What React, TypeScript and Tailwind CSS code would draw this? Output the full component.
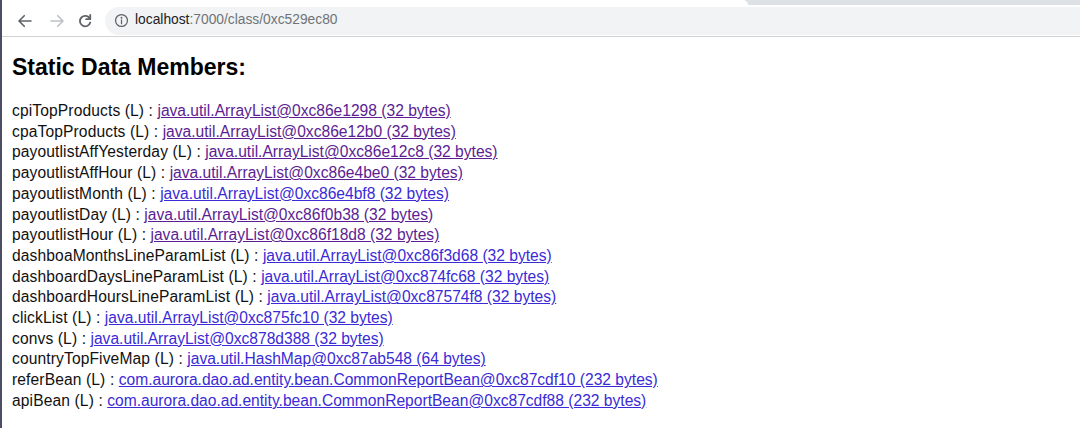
import React from "react";

const BLUE = "text-[#3a2bd6] decoration-[#3a2bd6]";
const PURPLE = "text-[#5b1e93] decoration-[#5b1e93]";

const rows: { name: string; link: string; visited: boolean }[] = [
  { name: "cpiTopProducts", link: "java.util.ArrayList@0xc86e1298 (32 bytes)", visited: true },
  { name: "cpaTopProducts", link: "java.util.ArrayList@0xc86e12b0 (32 bytes)", visited: true },
  { name: "payoutlistAffYesterday", link: "java.util.ArrayList@0xc86e12c8 (32 bytes)", visited: true },
  { name: "payoutlistAffHour", link: "java.util.ArrayList@0xc86e4be0 (32 bytes)", visited: true },
  { name: "payoutlistMonth", link: "java.util.ArrayList@0xc86e4bf8 (32 bytes)", visited: false },
  { name: "payoutlistDay", link: "java.util.ArrayList@0xc86f0b38 (32 bytes)", visited: true },
  { name: "payoutlistHour", link: "java.util.ArrayList@0xc86f18d8 (32 bytes)", visited: true },
  { name: "dashboaMonthsLineParamList", link: "java.util.ArrayList@0xc86f3d68 (32 bytes)", visited: false },
  { name: "dashboardDaysLineParamList", link: "java.util.ArrayList@0xc874fc68 (32 bytes)", visited: false },
  { name: "dashboardHoursLineParamList", link: "java.util.ArrayList@0xc87574f8 (32 bytes)", visited: false },
  { name: "clickList", link: "java.util.ArrayList@0xc875fc10 (32 bytes)", visited: false },
  { name: "convs", link: "java.util.ArrayList@0xc878d388 (32 bytes)", visited: false },
  { name: "countryTopFiveMap", link: "java.util.HashMap@0xc87ab548 (64 bytes)", visited: false },
  { name: "referBean", link: "com.aurora.dao.ad.entity.bean.CommonReportBean@0xc87cdf10 (232 bytes)", visited: false },
  { name: "apiBean", link: "com.aurora.dao.ad.entity.bean.CommonReportBean@0xc87cdf88 (232 bytes)", visited: false },
];

export default function App() {
  return (
    <div
      className="w-[1080px] h-[428px] overflow-hidden bg-white flex"
      style={{ fontFamily: '"Liberation Sans", Arial, sans-serif' }}
    >
      <div className="w-[2px] bg-[#4b4d63] shrink-0" />
      <div className="flex-1 flex flex-col">
        {/* tab strip */}
        <div className="h-[5px] flex bg-[#dee1e6]">
          <div className="w-[746px] bg-white rounded-tr-[6px]" />
        </div>
        {/* toolbar */}
        <div className="h-[32px] bg-white flex items-center border-b border-[#d3d3d3]">
          <div className="flex items-center pl-[14px] text-[#5f6368]">
            <svg width="18" height="18" viewBox="0 0 24 24" fill="none" stroke="#5f6368" strokeWidth="2.2" strokeLinecap="round" strokeLinejoin="round">
              <path d="M20 12H5M11 5l-7 7 7 7" />
            </svg>
            <svg className="ml-[14px]" width="18" height="18" viewBox="0 0 24 24" fill="none" stroke="#bdc1c6" strokeWidth="2.2" strokeLinecap="round" strokeLinejoin="round">
              <path d="M4 12h15M13 5l7 7-7 7" />
            </svg>
            <svg className="ml-[10px]" width="18" height="18" viewBox="0 0 24 24" fill="none" stroke="#5f6368" strokeWidth="2.4" strokeLinecap="round">
              <path d="M18.5 9A7 7 0 1 0 19 14" />
              <path d="M19 4v5.5h-5.5" strokeLinejoin="round" fill="none" />
            </svg>
          </div>
          <div className="ml-[11px] flex-1 h-[28px] rounded-l-full bg-[#f1f3f4] flex items-center pl-[9px]">
            <svg width="15" height="15" viewBox="0 0 24 24" fill="none" stroke="#5f6368" strokeWidth="2">
              <circle cx="12" cy="12" r="9.5" />
              <path d="M12 11v6" strokeLinecap="round" />
              <circle cx="12" cy="7.5" r="0.6" fill="#5f6368" />
            </svg>
            <span className="ml-[6px] text-[13.8px] text-[#202124]">localhost</span>
            <span className="text-[13.8px] text-[#6f7378]">:7000/class/0xc529ec80</span>
          </div>
        </div>
        {/* content */}
        <div className="pl-[10px] pt-[16px]">
          <h2 className="text-[23px] font-bold text-black leading-[28px]">Static Data Members:</h2>
          <div className="mt-[20px] text-[15.6px] leading-[20.7px] text-[#111]">
            {rows.map((r) => (
              <div key={r.name} className="whitespace-nowrap">
                <span className="tracking-[0.12px]">{r.name} (L) :</span>{" "}
                <a href="#" className={`underline ${r.visited ? PURPLE : BLUE}`}>
                  {r.link}
                </a>
              </div>
            ))}
          </div>
        </div>
      </div>
    </div>
  );
}
